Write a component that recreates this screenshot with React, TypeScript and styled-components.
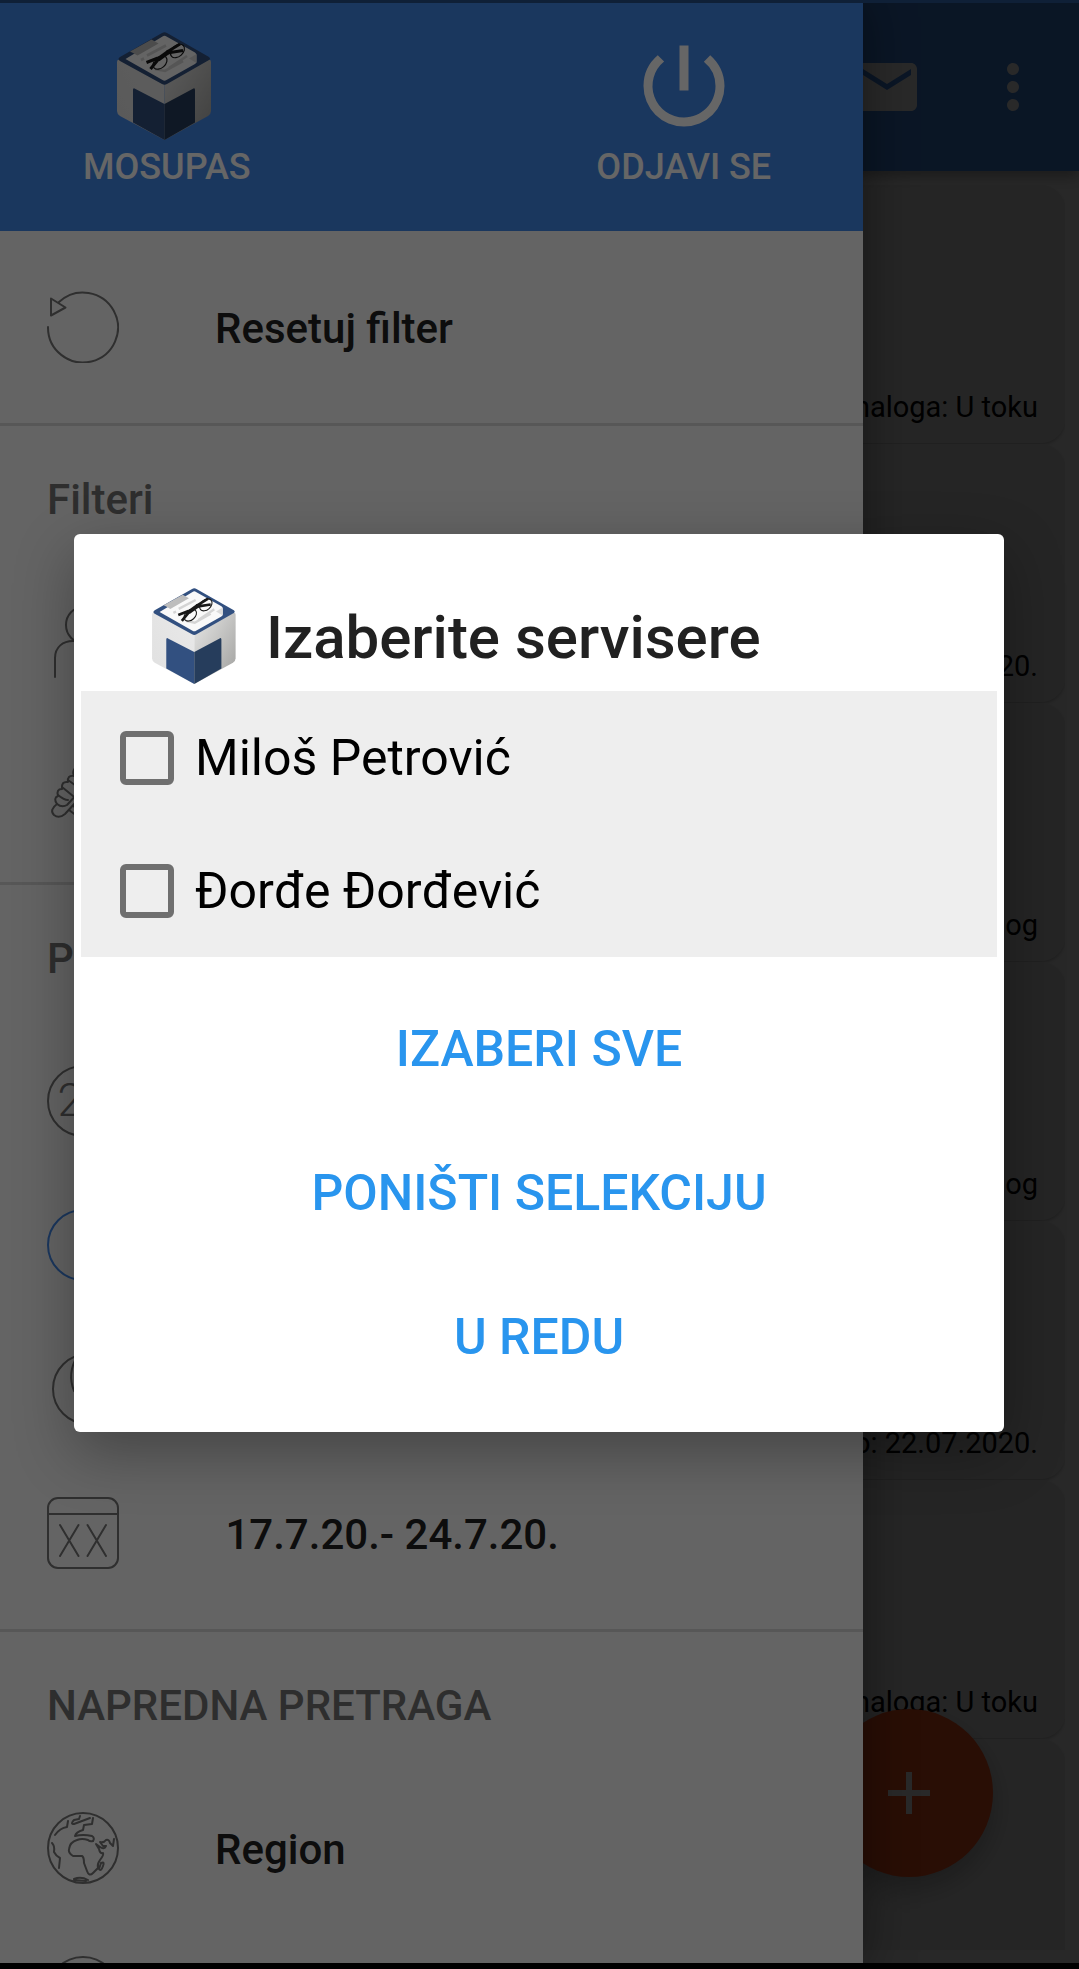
import React, { useState } from "react";
import styled, { createGlobalStyle } from "styled-components";
import { MdAdd, MdMail, MdMoreVert, MdPowerSettingsNew } from "react-icons/md";

const GlobalStyle = createGlobalStyle`
  *, *::before, *::after { box-sizing: border-box; }
  body { margin: 0; background: #000; font-family: Roboto, "Noto Sans", sans-serif; }
  button { font: inherit; border: 0; padding: 0; background: none; color: inherit; cursor: pointer; }
  h1, h2, ul, p { margin: 0; padding: 0; font: inherit; }
  ul { list-style: none; }
  svg { display: block; flex: none; }
`;

const Screen = styled.div`
  position: relative;
  display: flex;
  flex-direction: column;
  height: 100vh;
  overflow: hidden;
  padding: 3px 0 6px;
  background: #fafafa;
`;

const AppBar = styled.header`
  position: relative;
  z-index: 1;
  flex: none;
  display: flex;
  align-items: center;
  justify-content: flex-end;
  gap: 54px;
  height: 168px;
  padding-right: 30px;
  background: #4389eb;
  color: #fff;
  box-shadow: 0 6px 12px rgba(0, 0, 0, 0.3);
`;

const Orders = styled.ul`
  flex: 1 1 0;
  min-height: 0;
  overflow: hidden;
  display: flex;
  flex-direction: column;
  gap: 1px;
  margin: 14px 14px 13px;
`;

const Order = styled.li`
  flex: none;
  display: flex;
  align-items: flex-end;
  justify-content: flex-end;
  height: 258px;
  padding: 0 27px 18px;
  border-radius: 24px;
  background: #ececec;
  box-shadow: 0 2px 3px rgba(0, 0, 0, 0.2);
  color: #000;
  font-size: 29px;
  line-height: 36px;
`;

const Fab = styled.button`
  position: absolute;
  right: 86px;
  bottom: 92px;
  display: grid;
  place-items: center;
  width: 168px;
  height: 168px;
  border-radius: 50%;
  background: #ff5722;
  color: #fff;
  box-shadow: 0 12px 30px rgba(0, 0, 0, 0.25);
`;

const Scrim = styled.div`
  position: absolute;
  inset: 0;
  z-index: 2;
  background: rgba(0, 0, 0, 0.6);
`;

const Drawer = styled.nav`
  position: absolute;
  inset: 0 auto 0 0;
  z-index: 3;
  width: 80%;
  overflow: hidden;
  background: #fafafa;
  color: #212121;
  box-shadow: 0 0 48px rgba(0, 0, 0, 0.4);
`;

const DrawerHeader = styled.div`
  display: flex;
  justify-content: space-between;
  align-items: flex-start;
  height: 231px;
  padding: 32px 92px 0 83px;
  background: #4389eb;
  color: #fff;
`;

const HeaderAction = styled.button`
  display: flex;
  flex-direction: column;
  align-items: center;
  gap: 6px;
  font-size: 36px;
  font-weight: 500;
  line-height: 42px;
`;

const Section = styled.section`
  padding-bottom: 24px;

  & + & {
    border-top: 3px solid #dadada;
  }
`;

const FirstSection = styled(Section)`
  padding-top: 24px;
`;

const SectionTitle = styled.h2`
  display: flex;
  align-items: center;
  height: 144px;
  padding: 2px 0 0 47px;
  color: #737373;
  font-size: 42px;
  font-weight: 500;
`;

const MenuRow = styled.button<{ $active?: boolean }>`
  display: flex;
  align-items: center;
  gap: 96px;
  width: 100%;
  height: 144px;
  padding-left: 47px;
  font-size: 42px;
  font-weight: 500;
  text-align: left;
  white-space: pre;

  svg {
    color: ${(p) => (p.$active ? "#4389eb" : "#757575")};
  }
`;

const MenuLabel = styled.span`
  padding-top: 2px;
`;

const StatusBar = styled.div`
  position: absolute;
  inset: 0 0 auto;
  z-index: 4;
  height: 3px;
  background: #27508a;
`;

const DialogLayer = styled.div`
  position: absolute;
  inset: 0;
  z-index: 5;
  display: flex;
  align-items: center;
  padding: 3px 75px 6px 74px;
  background: rgba(0, 0, 0, 0.6);
`;

const Dialog = styled.div`
  flex: 1;
  padding: 54px 7px 24px;
  border-radius: 6px;
  background: #fff;
  box-shadow: 0 20px 60px rgba(0, 0, 0, 0.32);
`;

const DialogHead = styled.div`
  display: flex;
  align-items: flex-start;
  gap: 25px;
  padding: 0 71px 3px;
`;

const DialogTitle = styled.h1`
  color: #212121;
  font-size: 60px;
  font-weight: 500;
  line-height: 100px;
`;

const Choices = styled.div`
  margin-bottom: 19px;
  background: #eee;
`;

const Choice = styled.label`
  display: flex;
  align-items: center;
  gap: 21px;
  height: 133px;
  padding-left: 39px;
  color: #000;
  font-size: 50px;
  cursor: pointer;
`;

const CheckBox = styled.input`
  appearance: none;
  flex: none;
  width: 54px;
  height: 54px;
  margin: 0;
  border: 6px solid #6f6f6f;
  border-radius: 6px;

  &:checked {
    border-color: #2995ee;
    background: #2995ee;
  }
`;

const DialogButton = styled.button`
  display: block;
  width: 100%;
  height: 144px;
  padding-top: 2px;
  color: #2995ee;
  font-size: 50px;
  font-weight: 500;
  text-align: center;
`;

const NavigationBar = styled.div`
  position: absolute;
  inset: auto 0 0;
  z-index: 6;
  height: 6px;
  background: #000;
`;

function Logo({ id, width, height }: { id: string; width: number; height: number }) {
  return (
    <svg width={width} height={height} viewBox="0 0 100 108" aria-hidden="true">
      <defs>
        <linearGradient id={id + "l"} x1="0" y1="1" x2="1" y2="0">
          <stop offset="0" stopColor="#e0e0e0" />
          <stop offset="1" stopColor="#e9e9e9" />
        </linearGradient>
        <linearGradient id={id + "r"} x1="0" y1="0" x2="1" y2="1">
          <stop offset="0.1" stopColor="#e0e0df" />
          <stop offset="0.8" stopColor="#adadab" />
        </linearGradient>
      </defs>
      <path d="M0 30 Q0 27 3 28 L47.5 52 V108 L3 84 Q0 82 0 79Z" fill={`url(#${id}l)`} />
      <path d="M94 30 Q94 27 91 28 L47.5 52 V108 L91 84 Q94 82 94 79Z" fill={`url(#${id}r)`} />
      <path d="M16 58 Q16 55 18.500 57 L47.500 72 V108 L16 90.500Z" fill="#325080" />
      <path d="M78 58 Q78 55 75.500 57 L47.500 72 V108 L78 90.500Z" fill="#263d5c" />
      <path d="M45 1 Q47.500 -.5 50 1 L92 25 Q94 27 92 28 L50 52 Q47.500 53.500 45 52 L3 29 Q0 27 3 25Z" fill="#325080" />
      <path d="M45.500 4.500 Q47.500 3 49.500 4.500 L78 20.500 Q79.500 21.500 79.500 23 V29.500 Q79.500 31 78 32 L49.500 48 Q47.500 49.500 45.500 48 L8.500 27Z" fill="#f9f9f9" />
      <path d="M79.500 22 L72 26.500 L79.500 31Z" fill="#dcdcdc" />
      <path d="M13 19.500 L34.500 7.500 L41.500 11.500 L20.500 23.500 L17 21.500Z" fill="#bdbdbd" />
      <path d="M24 28 L27 26.500 M30 23.500 L49 13.500 M52 36 L70 24 M38 37 L48 39 L66 29" stroke="#d4d4d4" strokeWidth="2.600" fill="none" />
      <g fill="none" stroke="#181818">
        <ellipse cx="43" cy="30.500" rx="8" ry="5.500" transform="rotate(-42 43 30.500)" strokeWidth="1.200" />
        <ellipse cx="60.500" cy="19" rx="8" ry="5.500" transform="rotate(-42 60.500 19)" strokeWidth="1.200" />
        <path d="M29.500 30.500 L41 26 M33.500 37 L42 26.500 M50 20 L63 12 M50 21 L66 18.500" strokeWidth="3" />
        <path d="M41 27.500 L52 19.500" strokeWidth="4.500" />
      </g>
    </svg>
  );
}

function LineIcon({ children }: { children: React.ReactNode }) {
  return (
    <svg
      width="72"
      height="72"
      viewBox="0 0 72 72"
      fill="none"
      stroke="currentColor"
      strokeWidth="2"
      strokeLinecap="round"
      strokeLinejoin="round"
      aria-hidden="true"
    >
      {children}
    </svg>
  );
}

const ResetIcon = () => (
  <LineIcon>
    <path d="M1 36 A35 35 0 1 0 12 11" />
    <path d="M4 7.500 L18.500 16.500 L4 24.500Z" />
  </LineIcon>
);

const PersonIcon = () => (
  <LineIcon>
    <ellipse cx="36" cy="19" rx="17" ry="18" />
    <path d="M8 71 V52 C8 41 16 35 26 35 H46 C56 35 64 41 64 52 V71" />
  </LineIcon>
);

const WrenchHandIcon = () => (
  <LineIcon>
    <path d="M28 18 Q25 22 27 26 Q20 25 21 32 Q14 31 15 39 Q9 39 11 46 Q6 48 10 54 Q2 60 7 65 Q12 69 18 64 L40 40" />
    <path d="M21 30 L32 38 M15 37 L26 46 M11 45 Q17 50 21 50 M10 54 Q15 58 20 55 L32 42 M22 60 L30 66 M26 56 L40 62" />
  </LineIcon>
);

const DayIcon = () => (
  <LineIcon>
    <circle cx="36" cy="36" r="35" />
    <text
      x="36"
      y="51"
      textAnchor="middle"
      fontFamily="Roboto, sans-serif"
      fontSize="46"
      fontWeight="300"
      fill="currentColor"
      stroke="none"
    >
      24
    </text>
  </LineIcon>
);

const CircleIcon = () => (
  <LineIcon>
    <circle cx="36" cy="36" r="35" />
  </LineIcon>
);

const ClockIcon = () => (
  <LineIcon>
    <circle cx="41" cy="36" r="35" />
    <path d="M30 4 Q20 20 27 38 L44 52" />
  </LineIcon>
);

const CalendarIcon = () => (
  <LineIcon>
    <rect x="1" y="1" width="70" height="70" rx="10" />
    <path d="M1 17 H71 M13 28 L31.500 59 M31.500 28 L13 59 M40.500 28 L59 59 M59 28 L40.500 59" />
  </LineIcon>
);

const GlobeIcon = () => (
  <LineIcon>
    <circle cx="36" cy="36" r="35" />
    <path d="M46 29 Q43 30 41 28 Q35 26 30 28 Q23 30 22 37 Q21 41 26 44 L35 44 Q37 45 37 51 L40 59 Q42 65 46 61 L51 56 Q50 52 53 48 Q57 43 56 41 Q53 42 52 37 L49 32 L53 35 Q57 38 59 34 L56 34 L53 30 Q57 31 59 28 Q62 27 63 31 L66 34 L67 27" />
    <path d="M46 6 L45 12 L37 13 L36 18 Q29 20 28 24 Q36 22 45 24 Q48 26 46 29" />
    <path d="M33 4 L32 7 L27 8 Q23 12 27 12 L35 9 L43 6 M21 9 L20 15 Q13 16 8 23 M5 31 Q8 34 7 40 Q9 44 13 46 L12 56" />
    <path d="M54 51 Q58 49 56 54 Q54 60 52 57Z M27 67 Q34 64 41 68 M27 68 L39 69" />
  </LineIcon>
);

const orders = [
  "naloga: U toku",
  "22.07.2020.",
  "nalog",
  "nalog",
  "do: 22.07.2020.",
  "naloga: U toku",
  "",
];

const people = ["Miloš Petrović", "Đorđe Đorđević"];

export default function App() {
  const [selected, setSelected] = useState<string[]>([]);
  const [open, setOpen] = useState(true);

  const toggle = (name: string) =>
    setSelected((now) => (now.includes(name) ? now.filter((n) => n !== name) : [...now, name]));

  return (
    <>
      <GlobalStyle />
      <Screen>
        <AppBar>
          <button aria-label="Poruke">
            <MdMail size={72} />
          </button>
          <button aria-label="Meni">
            <MdMoreVert size={72} />
          </button>
        </AppBar>
        <Orders>
          {orders.map((text, i) => (
            <Order key={i}>{text}</Order>
          ))}
        </Orders>
        <Fab aria-label="Dodaj">
          <MdAdd size={72} />
        </Fab>

        <Scrim />
        <Drawer>
          <DrawerHeader>
            <HeaderAction>
              <Logo id="drawer" width={100} height={108} />
              MOSUPAS
            </HeaderAction>
            <HeaderAction>
              <MdPowerSettingsNew size={108} />
              ODJAVI SE
            </HeaderAction>
          </DrawerHeader>
          <FirstSection>
            <MenuRow>
              <ResetIcon />
              <MenuLabel>Resetuj filter</MenuLabel>
            </MenuRow>
          </FirstSection>
          <Section>
            <SectionTitle>Filteri</SectionTitle>
            <MenuRow aria-label="Serviseri" onClick={() => setOpen(true)}>
              <PersonIcon />
            </MenuRow>
            <MenuRow aria-label="Servis">
              <WrenchHandIcon />
            </MenuRow>
          </Section>
          <Section>
            <SectionTitle>Period</SectionTitle>
            <MenuRow aria-label="Dan">
              <DayIcon />
            </MenuRow>
            <MenuRow aria-label="Sedmica" $active>
              <CircleIcon />
            </MenuRow>
            <MenuRow aria-label="Vreme">
              <ClockIcon />
            </MenuRow>
            <MenuRow>
              <CalendarIcon />
              <MenuLabel>{" 17.7.20.- 24.7.20."}</MenuLabel>
            </MenuRow>
          </Section>
          <Section>
            <SectionTitle>NAPREDNA PRETRAGA</SectionTitle>
            <MenuRow>
              <GlobeIcon />
              <MenuLabel>Region</MenuLabel>
            </MenuRow>
            <MenuRow aria-label="Grad">
              <CircleIcon />
            </MenuRow>
          </Section>
        </Drawer>
        <StatusBar />

        {open && (
          <DialogLayer>
            <Dialog role="dialog" aria-modal="true" aria-labelledby="dialog-title">
              <DialogHead>
                <Logo id="dialog" width={89} height={96} />
                <DialogTitle id="dialog-title">Izaberite servisere</DialogTitle>
              </DialogHead>
              <Choices>
                {people.map((name) => (
                  <Choice key={name}>
                    <CheckBox
                      type="checkbox"
                      checked={selected.includes(name)}
                      onChange={() => toggle(name)}
                    />
                    {name}
                  </Choice>
                ))}
              </Choices>
              <DialogButton onClick={() => setSelected(people)}>IZABERI SVE</DialogButton>
              <DialogButton onClick={() => setSelected([])}>PONIŠTI SELEKCIJU</DialogButton>
              <DialogButton onClick={() => setOpen(false)}>U REDU</DialogButton>
            </Dialog>
          </DialogLayer>
        )}
        <NavigationBar />
      </Screen>
    </>
  );
}
